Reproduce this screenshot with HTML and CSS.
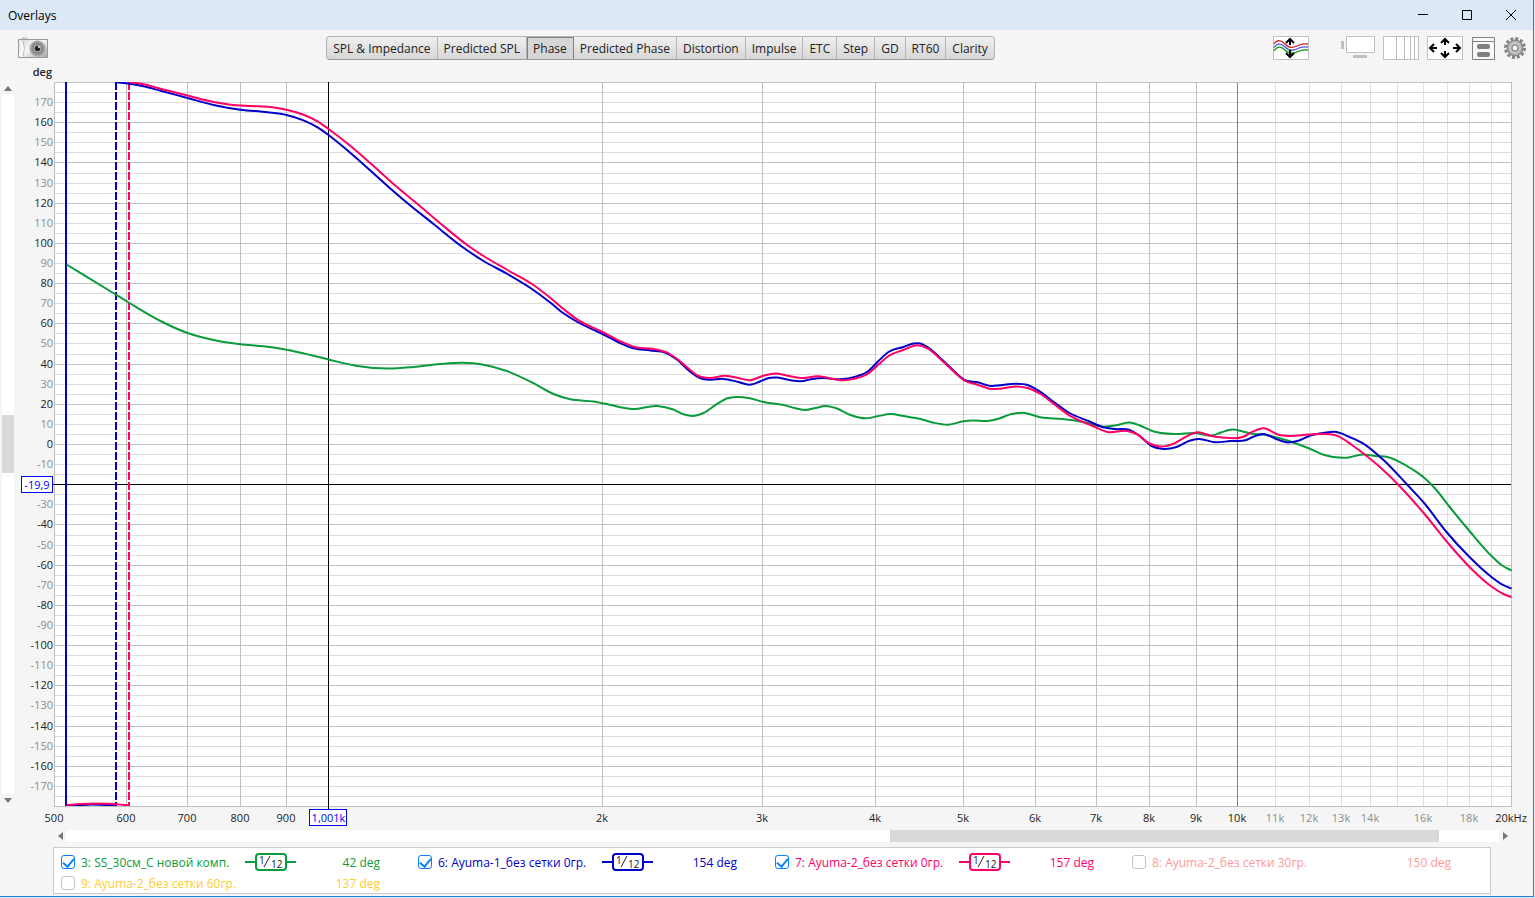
FILE: index.html
```html
<!DOCTYPE html>
<html lang="en">
<head>
    <meta charset="UTF-8">
    <meta name="viewport" content="width=device-width, initial-scale=1.0">
    <title>Overlays</title>
    <link rel="stylesheet" href="styles.css">
</head>
<body>
    <div class="window">
        <header class="titlebar">
            <h1>Overlays</h1>
            <div class="window-buttons">
                <button type="button" aria-label="Minimize"><svg width="12" height="12"><path d="M1 5.5h10"/></svg></button>
                <button type="button" aria-label="Maximize"><svg width="12" height="12"><path d="M1.5 1.5h9v9h-9z"/></svg></button>
                <button type="button" aria-label="Close"><svg width="12" height="12"><path d="M1 1l10 10M11 1L1 11"/></svg></button>
            </div>
        </header>

        <div class="toolbar">
            <button type="button" class="icon" aria-label="Capture">
                <svg width="30" height="22" viewBox="0 0 30 22">
                    <defs>
                        <linearGradient id="body" x1="0" y1="0" x2="1" y2="1">
                            <stop offset="0" stop-color="#d8d8d8"/>
                            <stop offset=".45" stop-color="#f6f6f6"/>
                            <stop offset="1" stop-color="#a8a8a8"/>
                        </linearGradient>
                        <radialGradient id="lens">
                            <stop offset="0" stop-color="#333"/>
                            <stop offset=".3" stop-color="#555"/>
                            <stop offset=".45" stop-color="#b5b5b5"/>
                            <stop offset=".75" stop-color="#888"/>
                            <stop offset="1" stop-color="#c8c8c8"/>
                        </radialGradient>
                    </defs>
                    <path d="M4 2V1h5v1" fill="#ddd" stroke="#bbb"/>
                    <path d="M.5 2.5h29v18H.5z" fill="url(#body)" stroke="#999"/>
                    <path d="M2 4q5 7 1 15" fill="none" stroke="#fff" stroke-width="2"/>
                    <path d="M5 4q3 7 0 15" fill="none" stroke="#bbb"/>
                    <circle cx="19.500" cy="11.500" r="7.500" fill="url(#lens)" stroke="#999"/>
                    <circle cx="19.500" cy="11.500" r="4.500" fill="none" stroke="#777"/>
                    <circle cx="19.500" cy="11.500" r="2.500" fill="#222"/>
                    <circle cx="21" cy="10" r="1" fill="#eee"/>
                </svg>
            </button>

            <nav class="tabs">
                <button type="button">SPL &amp; Impedance</button>
                <button type="button">Predicted SPL</button>
                <button type="button" class="active">Phase</button>
                <button type="button">Predicted Phase</button>
                <button type="button">Distortion</button>
                <button type="button">Impulse</button>
                <button type="button">ETC</button>
                <button type="button">Step</button>
                <button type="button">GD</button>
                <button type="button">RT60</button>
                <button type="button">Clarity</button>
            </nav>

            <div class="tools">
                <button type="button" class="icon" aria-label="Separate traces">
                    <svg width="36" height="24" viewBox="0 0 36 24">
                        <path d="M.5 .5h35v23H.5z" fill="#fff" stroke="#c0c0c0"/>
                        <g fill="none" stroke-width="1.300">
                            <path d="M1 8C4 3.500 8 3.500 12 8s9 4 14 1q4-1.500 9-1" stroke="#c22"/>
                            <path d="M1 11.500C4 7 8 7 12 11s9 4 14 1q4-1.500 9-1" stroke="#55d"/>
                            <path d="M1 15C4 10 8 10 12 14s9 4 14 1q4-1.500 9-1" stroke="#191"/>
                        </g>
                        <path d="M17 9V4M13 7l4-4 4 4M17 14v5M13 17l4 4 4-4" fill="none" stroke="#000" stroke-width="2"/>
                    </svg>
                </button>
                <button type="button" class="icon screen" aria-label="Scrollbars">
                    <svg width="34" height="24" viewBox="0 0 34 24">
                        <path d="M5.500 .5h28v16h-28z" fill="#fff" stroke="#c0c0c0"/>
                        <path d="M0 5h3v8H0zM12 19h14v3H12z" fill="#c0c0c0"/>
                    </svg>
                </button>
                <button type="button" class="icon" aria-label="Frequency axis">
                    <svg width="36" height="24" viewBox="0 0 36 24">
                        <path d="M.5 .5h35v23H.5zM13.500 1v22M21.500 1v22M27.500 1v22M31.500 1v22" fill="#fff" stroke="#c0c0c0"/>
                    </svg>
                </button>
                <button type="button" class="icon" aria-label="Graph limits">
                    <svg width="36" height="24" viewBox="0 0 36 24">
                        <path d="M.5 .5h35v23H.5z" fill="#fff" stroke="#c0c0c0"/>
                        <path d="M18 9V4M14 7l4-4 4 4M18 15v5M14 17l4 4 4-4M10 12H4M7 8l-4 4 4 4M26 12h6M29 8l4 4-4 4" fill="none" stroke="#000" stroke-width="2"/>
                    </svg>
                </button>
                <button type="button" class="icon" aria-label="Panels">
                    <svg width="24" height="24" viewBox="0 0 24 24">
                        <path d="M1.500 1.500h22v22h-22zM2 5.500h21" fill="#f8f8f8" stroke="#808080"/>
                        <rect x="6" y="8" width="13" height="5" rx="2" fill="#808080"/>
                        <rect x="6" y="16" width="13" height="5" rx="2" fill="#808080"/>
                    </svg>
                </button>
                <button type="button" class="icon" aria-label="Settings">
                    <svg width="24" height="24" viewBox="0 0 24 24">
                        <circle cx="12" cy="12" r="9.500" fill="none" stroke="#858585" stroke-width="3" stroke-dasharray="3 1.974"/>
                        <circle cx="12" cy="12" r="8" fill="#a8a8a8" stroke="#808080"/>
                        <circle cx="12" cy="12" r="5" fill="none" stroke="#c8c8c8" stroke-width="2"/>
                        <circle cx="12" cy="12" r="3" fill="#f5f5f5" stroke="#808080"/>
                    </svg>
                </button>
            </div>
        </div>

        <main class="graph">
            <div class="scroll vertical">
                <button type="button" aria-label="Scroll up"><svg width="8" height="5"><path d="M0 5l4-5 4 5z"/></svg></button>
                <div class="track"><div class="thumb"></div></div>
                <button type="button" aria-label="Scroll down"><svg width="8" height="5"><path d="M0 0l4 5 4-5z"/></svg></button>
            </div>
            <div class="plot"><svg id="plot"></svg></div>
        </main>

        <div class="scroll horizontal">
            <button type="button" aria-label="Scroll left"><svg width="5" height="8"><path d="M5 0L0 4l5 4z"/></svg></button>
            <div class="track"><div class="thumb"></div></div>
            <button type="button" aria-label="Scroll right"><svg width="5" height="8"><path d="M0 0l5 4-5 4z"/></svg></button>
        </div>

        <section class="legend">
            <div class="trace green">
                <input type="checkbox" id="t3" checked>
                <label for="t3">3: SS_30см_С новой комп.</label>
                <svg class="smoothing" width="52" height="18"><path d="M0 9h11M41 9h10"/><rect x="11" y="1" width="30" height="16" rx="3"/><text x="14" y="11">1</text><path class="slash" d="M19 14l6-11"/><text x="26" y="15">12</text></svg>
                <output>42 deg</output>
            </div>
            <div class="trace blue">
                <input type="checkbox" id="t6" checked>
                <label for="t6">6: Ayuma-1_без сетки 0гр.</label>
                <svg class="smoothing" width="52" height="18"><path d="M0 9h11M41 9h10"/><rect x="11" y="1" width="30" height="16" rx="3"/><text x="14" y="11">1</text><path class="slash" d="M19 14l6-11"/><text x="26" y="15">12</text></svg>
                <output>154 deg</output>
            </div>
            <div class="trace red">
                <input type="checkbox" id="t7" checked>
                <label for="t7">7: Ayuma-2_без сетки 0гр.</label>
                <svg class="smoothing" width="52" height="18"><path d="M0 9h11M41 9h10"/><rect x="11" y="1" width="30" height="16" rx="3"/><text x="14" y="11">1</text><path class="slash" d="M19 14l6-11"/><text x="26" y="15">12</text></svg>
                <output>157 deg</output>
            </div>
            <div class="trace pink">
                <input type="checkbox" id="t8">
                <label for="t8">8: Ayuma-2_без сетки 30гр.</label>
                <output>150 deg</output>
            </div>
            <div class="trace yellow">
                <input type="checkbox" id="t9">
                <label for="t9">9: Ayuma-2_без сетки 60гр.</label>
                <output>137 deg</output>
            </div>
        </section>
    </div>
    <script src="script.js"></script>
</body>
</html>
```
FILE: styles.css
```css
* {
    margin: 0;
    padding: 0;
    box-sizing: border-box;
}
body {
    height: 100vh;
    padding: 0 1px 1px 0;
    background-color: #e4eaf0;
    font-family: "Open Sans", "Noto Sans", sans-serif;
    font-size: 12px;
    color: #222;
}
button {
    border: none;
    background: none;
    font: inherit;
    color: inherit;
}
svg {
    display: block;
}
.window {
    height: 100%;
    min-height: 480px;
    display: flex;
    flex-direction: column;
    background-color: #f5f5f5;
    border-right: 1px solid #1883d7;
    border-bottom: 1px solid #1883d7;
}

/* title bar */
.titlebar {
    height: 30px;
    padding-left: 8px;
    display: flex;
    align-items: center;
    justify-content: space-between;
    background-color: #dce8f6;
    color: #000;
}
.titlebar h1 {
    font-size: 12px;
    font-weight: normal;
}
.window-buttons {
    display: flex;
}
.window-buttons button {
    width: 44px;
    height: 30px;
    display: flex;
    align-items: center;
    justify-content: center;
}
.window-buttons path {
    fill: none;
    stroke: #000;
}

/* toolbar */
.toolbar {
    height: 36px;
    padding: 0 6px 0 18px;
    display: flex;
    align-items: center;
    justify-content: space-between;
}
.tabs {
    display: flex;
    height: 24px;
    border: 1px solid #b4b4b4;
    border-bottom-color: #999;
    border-radius: 4px;
    overflow: hidden;
    background: linear-gradient(#f0f0f0, #d6d6d6);
}
.tabs button {
    padding: 0 6px;
    border-right: 1px solid #b4b4b4;
    white-space: nowrap;
}
.tabs button:last-child {
    border-right: none;
}
.tabs .active {
    background-color: #d6d6d6;
    border-right-color: #808080;
    box-shadow: inset 1px 1px 0 #808080;
}
.tools {
    display: flex;
    gap: 8px;
}
.tools .screen {
    margin-left: 24px;
}

/* graph */
.graph {
    flex: 1;
    min-height: 0;
    display: flex;
}
.plot {
    flex: 1;
    min-width: 0;
}
#plot {
    width: 100%;
    height: 100%;
    overflow: visible;
}
#plot text {
    font-size: 11px;
    fill: #222;
}
#plot .dim {
    fill: #8c8c8c;
}
#plot .unit {
    font-weight: 600;
}
#plot .area {
    fill: #fff;
}
#plot .frame {
    fill: none;
    stroke: #c0c0c0;
}
#plot .minor {
    stroke: #dedede;
}
#plot .major {
    stroke: #c0c0c0;
}
#plot .decade {
    stroke: #808080;
}
#plot .cursor {
    stroke: #000;
}
#plot .readout rect {
    fill: #fff;
    stroke: #0000ff;
}
#plot .readout text {
    fill: #0000ff;
    text-anchor: middle;
}
#plot .curve {
    fill: none;
    stroke-width: 2;
}
#plot .wrap {
    stroke-dasharray: 8 2;
}
.curve.green {
    stroke: #0a9b3c;
}
.curve.blue {
    stroke: #0000c8;
}
.curve.red {
    stroke: #ff0066;
}

/* scrollbars */
.scroll {
    display: flex;
}
.scroll button {
    display: flex;
    align-items: center;
    justify-content: center;
    width: 12px;
    height: 12px;
}
.scroll path {
    fill: #777;
}
.scroll .track {
    flex: 1;
    display: flex;
    background-color: #fff;
}
.scroll .thumb {
    background-color: #d9d9d9;
}
.vertical {
    flex-direction: column;
    width: 14px;
    padding: 16px 0 22px 2px;
}
.vertical .track {
    flex-direction: column;
}
.vertical .thumb {
    height: 58px;
    margin: auto 0;
}
.horizontal {
    margin: 2px 22px 5px 54px;
}
.horizontal .track {
    justify-content: flex-end;
}
.horizontal .thumb {
    width: 549px;
    margin-right: 60px;
}

/* legend */
.legend {
    margin: 0 42px 2px 53px;
    padding: 4px 0 0 7px;
    height: 47px;
    display: grid;
    grid-template-columns: repeat(4, 357px);
    grid-auto-rows: 21px;
    background-color: #fff;
    border: 1px solid #ccc;
}
.trace {
    display: flex;
    align-items: center;
    height: 20px;
    padding-right: 38px;
}
.trace input {
    appearance: none;
    width: 14px;
    height: 14px;
    margin-right: 6px;
    display: flex;
    justify-content: center;
    border: 1px solid #c4c4c4;
    border-radius: 3px;
    background-color: #fff;
}
.trace input:checked {
    border-color: #0a80ff;
}
.trace input:checked::after {
    content: "";
    width: 5px;
    height: 9px;
    border: solid #0a80ff;
    border-width: 0 2px 2px 0;
    transform: rotate(40deg);
}
.trace label {
    width: 164px;
    white-space: nowrap;
}
.trace output {
    margin-left: auto;
}
.green {
    color: #0a9b3c;
}
.blue {
    color: #0000c8;
}
.red {
    color: #ff0066;
}
.pink {
    color: #ff9999;
}
.yellow {
    color: #ffcc33;
}
.smoothing rect,
.smoothing path {
    fill: none;
    stroke: currentColor;
    stroke-width: 2;
}
.smoothing .slash {
    stroke: #222;
    stroke-width: 1;
}
.smoothing text {
    font-size: 10px;
    fill: #222;
}
```
FILE: script.js
```js
const svg = document.querySelector('#plot');
const margin = { left: 40, right: 22, top: 16, bottom: 22 };
const minFreq = 500;
const maxFreq = 20000;
const cursor = { freq: 1001, deg: -19.9 };

// traces are stored on a 1457 x 724 canvas whose corner is at 54, 82
const base = { x: 54, y: 82, width: 1457, height: 724 };
const traces = {
    green: [66,264.5, 116,295, 129,303, 160,321, 187,333, 213,340, 240,344.3, 263,346.3, 286,349.7, 310,355, 328,359.5, 357,366, 387,368.6, 413,367, 440,364, 462,362.8, 483,364.7, 507,371.3, 530,381.7, 553,394, 570,399.3, 593,401.5, 610,405, 632,409, 657,406, 672,409.3, 683,414.3, 693,416, 703,413, 717,403.7, 727,398.3, 736,397, 748,398, 763,402, 783,405, 795,408.3, 805,410, 815,408, 825,406, 835,408, 850,415, 865,418.3, 877,416.3, 890,414, 903,416, 920,419, 933,422.7, 948,424.7, 963,421.3, 972,420.5, 987,421, 998,418.7, 1011,414, 1022,412.8, 1041,417.5, 1062,419, 1086,422.7, 1103,426.7, 1116,425.3, 1129,422.5, 1140,425.7, 1151,430.7, 1174,434, 1194,433, 1213,435.3, 1221,432.3, 1232,429.5, 1243,431.7, 1252,433.7, 1263,434.5, 1282,439, 1297,444, 1310,449, 1323,454.7, 1346,457.7, 1362,454.5, 1375,456, 1387,457, 1398,461.3, 1413,470, 1424,478, 1435,489, 1450,508, 1469,531, 1491,556, 1502,565.7, 1511,570.5],
    blue: [116,82.3, 129,83.7, 143,86.3, 160,90.7, 187,98, 213,105, 240,109.7, 267,112.3, 286,115, 303,120.3, 317,127.3, 328,135, 350,153, 387,186, 408,204, 433,224, 462,247, 483,261, 507,274, 530,288, 550,302.7, 563,313.3, 577,322, 602,334, 620,343.3, 632,348, 650,350.5, 665,352.7, 677,360, 690,372, 700,378.3, 710,379.7, 723,378.9, 737,381.7, 749,384.7, 760,381.3, 768,378, 777,377.5, 790,380.3, 800,381.3, 812,379, 822,378, 840,379.3, 855,376.7, 867,371.7, 878,361, 888,352, 903,347, 913,343.5, 920,343.5, 927,347, 943,361, 957,374.3, 963,379.3, 977,382.3, 991,386, 1000,385.3, 1015,383.7, 1027,385, 1038,390.7, 1054,402.5, 1069,413, 1088,421, 1103,427.3, 1114,429, 1129,430, 1138,435, 1151,446, 1163,449, 1176,447, 1189,440.7, 1198,439, 1215,442.3, 1230,441, 1245,440.3, 1254,436.3, 1263,434, 1275,438.7, 1286,442.3, 1297,441, 1310,435.5, 1323,433, 1336,432, 1349,437, 1364,444.3, 1383,460, 1407,485, 1424,503.5, 1446,532, 1469,557, 1491,577, 1502,584.7, 1511,588.5],
    red: [129,82.3, 142,84, 160,88.7, 187,95.5, 213,102, 230,104.7, 250,106, 270,107, 286,109.7, 303,114.7, 317,121.3, 328,129, 350,146, 370,163.3, 393,184, 417,204, 440,223.5, 468,246, 483,256, 507,270, 530,283, 550,298, 563,309, 577,319.7, 602,332, 620,341.3, 633,346.7, 653,349, 665,351.9, 678,360, 690,370.3, 698,376, 708,378, 725,375.8, 737,377.7, 749,380.3, 763,375.7, 775,373.4, 787,375.7, 800,378, 818,376.3, 833,379, 843,380.3, 855,378.5, 867,374, 878,364.5, 888,356, 903,350, 917,345.3, 927,348.3, 943,362, 957,375, 963,380, 977,384.7, 991,389, 1000,388.7, 1017,386.4, 1028,388.3, 1040,394, 1054,404.5, 1071,416.7, 1090,425, 1107,432, 1127,431, 1137,434.5, 1148,443, 1159,446.4, 1174,443.3, 1185,437, 1197,432.3, 1211,436, 1222,437.5, 1243,436.7, 1252,431.7, 1263,428.3, 1278,434.7, 1290,436, 1308,434.5, 1323,434, 1338,436.3, 1351,444.7, 1364,454.3, 1387,474, 1398,485, 1424,514, 1450,546, 1472,570, 1491,586.5, 1504,594.5, 1511,597]
};
const wrapped = [
    { name: 'blue', points: [66,806, 80,805, 92,804.5, 104,805, 116,806] },
    { name: 'red', points: [66,805, 80,804, 97,803.5, 113,804, 129,805.5] }
];

function add(tag, attributes, parent = svg) {
    const node = document.createElementNS('http://www.w3.org/2000/svg', tag);
    for (const key in attributes) {
        node.setAttribute(key, attributes[key]);
    }
    parent.appendChild(node);
    return node;
}

function draw() {
    const box = svg.getBoundingClientRect();
    const width = box.width - margin.left - margin.right;
    const height = box.height - margin.top - margin.bottom;
    const right = margin.left + width;
    const bottom = margin.top + height;
    const x = freq => margin.left + width * Math.log(freq / minFreq) / Math.log(maxFreq / minFreq);
    const y = deg => margin.top + height * (180 - deg) / 360;
    const crisp = value => Math.round(value) + 0.5;

    function line(x1, y1, x2, y2, name) {
        add('line', { x1, y1, x2, y2, class: name });
    }
    function label(text, px, py, anchor, name) {
        add('text', { x: px, y: py, 'text-anchor': anchor, class: name }).textContent = text;
    }
    // smooth line through the points
    function curve(list, name) {
        const p = [];
        for (let i = 0; i < list.length; i += 2) {
            p.push([
                margin.left + 0.5 + (list[i] - base.x) * width / base.width,
                margin.top + (list[i + 1] - base.y) * height / base.height
            ]);
        }
        const last = p.length - 1;
        const rise = i => (p[i + 1][1] - p[i][1]) / (p[i + 1][0] - p[i][0]);
        const slope = p.map((point, i) => {
            if (i == 0) {
                return rise(0);
            }
            if (i == last) {
                return rise(last - 1);
            }
            const before = p[i][0] - p[i - 1][0];
            const after = p[i + 1][0] - p[i][0];
            return (rise(i - 1) * after + rise(i) * before) / (before + after);
        });
        let d = `M${p[0]}`;
        for (let i = 0; i < last; i++) {
            const step = (p[i + 1][0] - p[i][0]) / 3;
            d += `C${p[i][0] + step} ${p[i][1] + slope[i] * step} ${p[i + 1][0] - step} ${p[i + 1][1] - slope[i + 1] * step} ${p[i + 1]}`;
        }
        add('path', { d, class: `curve ${name}`, 'clip-path': 'url(#inside)' });
    }

    svg.innerHTML = '';
    const clip = add('clipPath', { id: 'inside' });
    add('rect', { x: margin.left, y: margin.top, width: width + 1, height }, clip);
    add('rect', { x: margin.left, y: margin.top, width, height, class: 'area' });

    // light grid first, then the labelled lines
    for (let deg = -175; deg < 180; deg += 5) {
        if (deg % 20 != 0) {
            line(margin.left, crisp(y(deg)), right, crisp(y(deg)), 'minor');
        }
    }
    for (let k = 11; k < 20; k++) {
        line(crisp(x(k * 1000)), margin.top, crisp(x(k * 1000)), bottom, 'minor');
    }
    for (let deg = -160; deg < 180; deg += 20) {
        line(margin.left, crisp(y(deg)), right, crisp(y(deg)), 'major');
    }
    for (const freq of [600, 700, 800, 900, 2000, 3000, 4000, 5000, 6000, 7000, 8000, 9000]) {
        line(crisp(x(freq)), margin.top, crisp(x(freq)), bottom, 'major');
    }
    line(crisp(x(10000)), margin.top, crisp(x(10000)), bottom, 'decade');
    add('rect', { x: margin.left + 0.5, y: margin.top + 0.5, width, height, class: 'frame' });

    for (let deg = -170; deg < 180; deg += 10) {
        if (deg != -20) {
            label(deg, margin.left - 1, Math.round(y(deg)) + 4, 'end', deg % 20 ? 'dim' : '');
        }
    }
    label('deg', margin.left - 2, 10, 'end', 'unit');
    for (const freq of [500, 600, 700, 800, 900, 2000, 3000, 4000, 5000, 6000, 7000, 8000, 9000, 10000, 11000, 12000, 13000, 14000, 16000, 18000, 20000]) {
        const text = freq < 1000 ? freq : freq / 1000 + (freq == maxFreq ? 'kHz' : 'k');
        label(text, Math.round(x(freq)), bottom + 16, 'middle', freq > 10000 && freq < maxFreq ? 'dim' : '');
    }

    const cx = crisp(x(cursor.freq));
    const cy = crisp(y(cursor.deg));
    line(cx, margin.top, cx, bottom + 3, 'cursor');
    line(margin.left - 2, cy, right, cy, 'cursor');

    // phase wraps
    const unit = width / base.width;
    const wraps = [[66, 'blue'], [116, 'blue wrap'], [129, 'red wrap']];
    for (const [px, name] of wraps) {
        const wx = Math.round(margin.left + (px - base.x) * unit);
        line(wx, margin.top, wx, bottom, `curve ${name}`);
    }
    for (const part of wrapped) {
        curve(part.points, part.name);
    }
    for (const name in traces) {
        curve(traces[name], name);
    }

    const level = add('g', { class: 'readout' });
    add('rect', { x: margin.left - 33 + 0.5, y: cy - 8, width: 31, height: 16 }, level);
    add('text', { x: margin.left - 17, y: cy + 4 }, level).textContent = '-19,9';
    const freq = add('g', { class: 'readout' });
    add('rect', { x: cx - 19, y: bottom + 3.5, width: 37, height: 16 }, freq);
    add('text', { x: cx, y: bottom + 16 }, freq).textContent = '1,001k';
}

draw();
window.addEventListener('resize', draw);
```
